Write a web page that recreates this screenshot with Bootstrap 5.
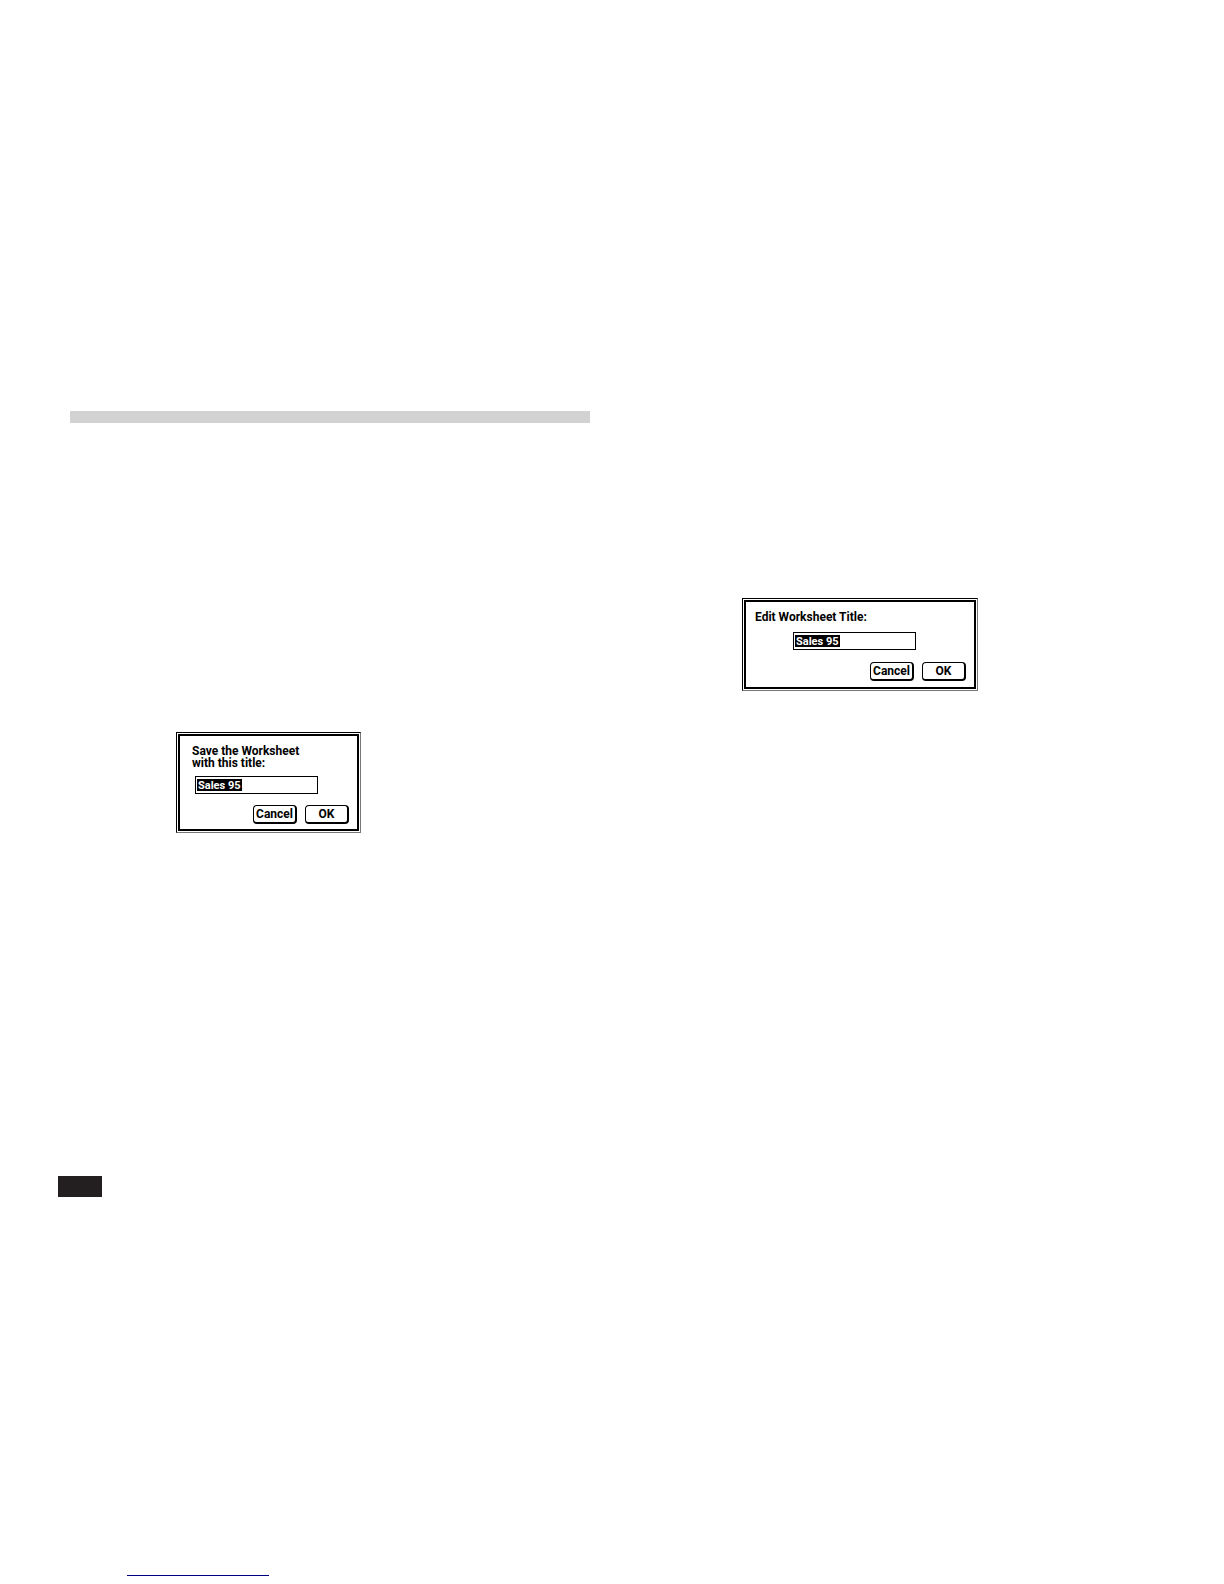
<!DOCTYPE html>
<html lang="en">
<head>
<meta charset="utf-8">
<meta name="viewport" content="width=device-width, initial-scale=1">
<title>Worksheet title dialogs</title>
<link href="https://cdn.jsdelivr.net/npm/bootstrap@5.3.0/dist/css/bootstrap.min.css" rel="stylesheet">
<style>
  body { font-family: Roboto, "Liberation Sans", sans-serif; font-size: 12px; line-height: 12px; color: #000; background: #fff; }
  .page-left { padding-top: 411px; }
  .page-right { padding-top: 598px; }
  .section-bar { height: 12px; margin: 0 22px 309px 70px; background: #d2d2d2; }
  .mac-dialog { border: 1px solid #000; border-right-color: #777; border-bottom-color: #777; padding: 1px; }
  .mac-dialog-body { border: 2px solid #000; }
  .dialog-save { width: 185px; margin-left: 176px; }
  .dialog-save .mac-dialog-body { padding: 9px 8px 5px 12px; }
  .dialog-edit { width: 236px; margin-left: 130px; }
  .dialog-edit .mac-dialog-body { padding: 9px 8px 6px 9px; }
  .mac-label { display: block; font-weight: 700; }
  .mac-field { display: block; width: 123px; height: 18px; padding: 0 2px; border: 1px solid #000; border-radius: 0; outline: 0;
    font-size: 11px; font-weight: 700; line-height: 12px; color: #fff;
    background: linear-gradient(#000, #000) 1px 2px / 45px 12px no-repeat #fff; }
  .dialog-save .mac-field { margin: 7px 0 11px 3px; }
  .dialog-edit .mac-field { margin: 9px 0 12px 38px; }
  .mac-btn, .mac-btn:hover { width: 44px; height: 19px; padding: 0; border: 1px solid #000; border-right-width: 2px; border-bottom-width: 2px; border-radius: 4px;
    font-size: 12px; font-weight: 700; line-height: 12px; color: #000; background: #fff; }
  .page-tab { width: 44px; height: 21px; margin: 343px 0 0 58px; background: #231f20; }
  .foot-rule { width: 142px; margin: 378px 0 8px 127px; border-top: 1px solid #000080; }
</style>
</head>
<body>
<main class="row g-0">
  <section class="col-6 page-left">
    <div class="section-bar"></div>
    <form class="mac-dialog dialog-save">
      <div class="mac-dialog-body">
        <label class="mac-label" for="save-title">Save the Worksheet<br>with this title:</label>
        <input class="mac-field" id="save-title" type="text" value="Sales 95">
        <div class="d-flex justify-content-end gap-2">
          <button type="button" class="btn mac-btn">Cancel</button>
          <button type="button" class="btn mac-btn">OK</button>
        </div>
      </div>
    </form>
    <div class="page-tab"></div>
    <div class="foot-rule"></div>
  </section>
  <section class="col-6 page-right">
    <form class="mac-dialog dialog-edit">
      <div class="mac-dialog-body">
        <label class="mac-label" for="edit-title">Edit Worksheet Title:</label>
        <input class="mac-field" id="edit-title" type="text" value="Sales 95">
        <div class="d-flex justify-content-end gap-2">
          <button type="button" class="btn mac-btn">Cancel</button>
          <button type="button" class="btn mac-btn">OK</button>
        </div>
      </div>
    </form>
  </section>
</main>
<script src="https://cdn.jsdelivr.net/npm/bootstrap@5.3.0/dist/js/bootstrap.bundle.min.js"></script>
</body>
</html>
